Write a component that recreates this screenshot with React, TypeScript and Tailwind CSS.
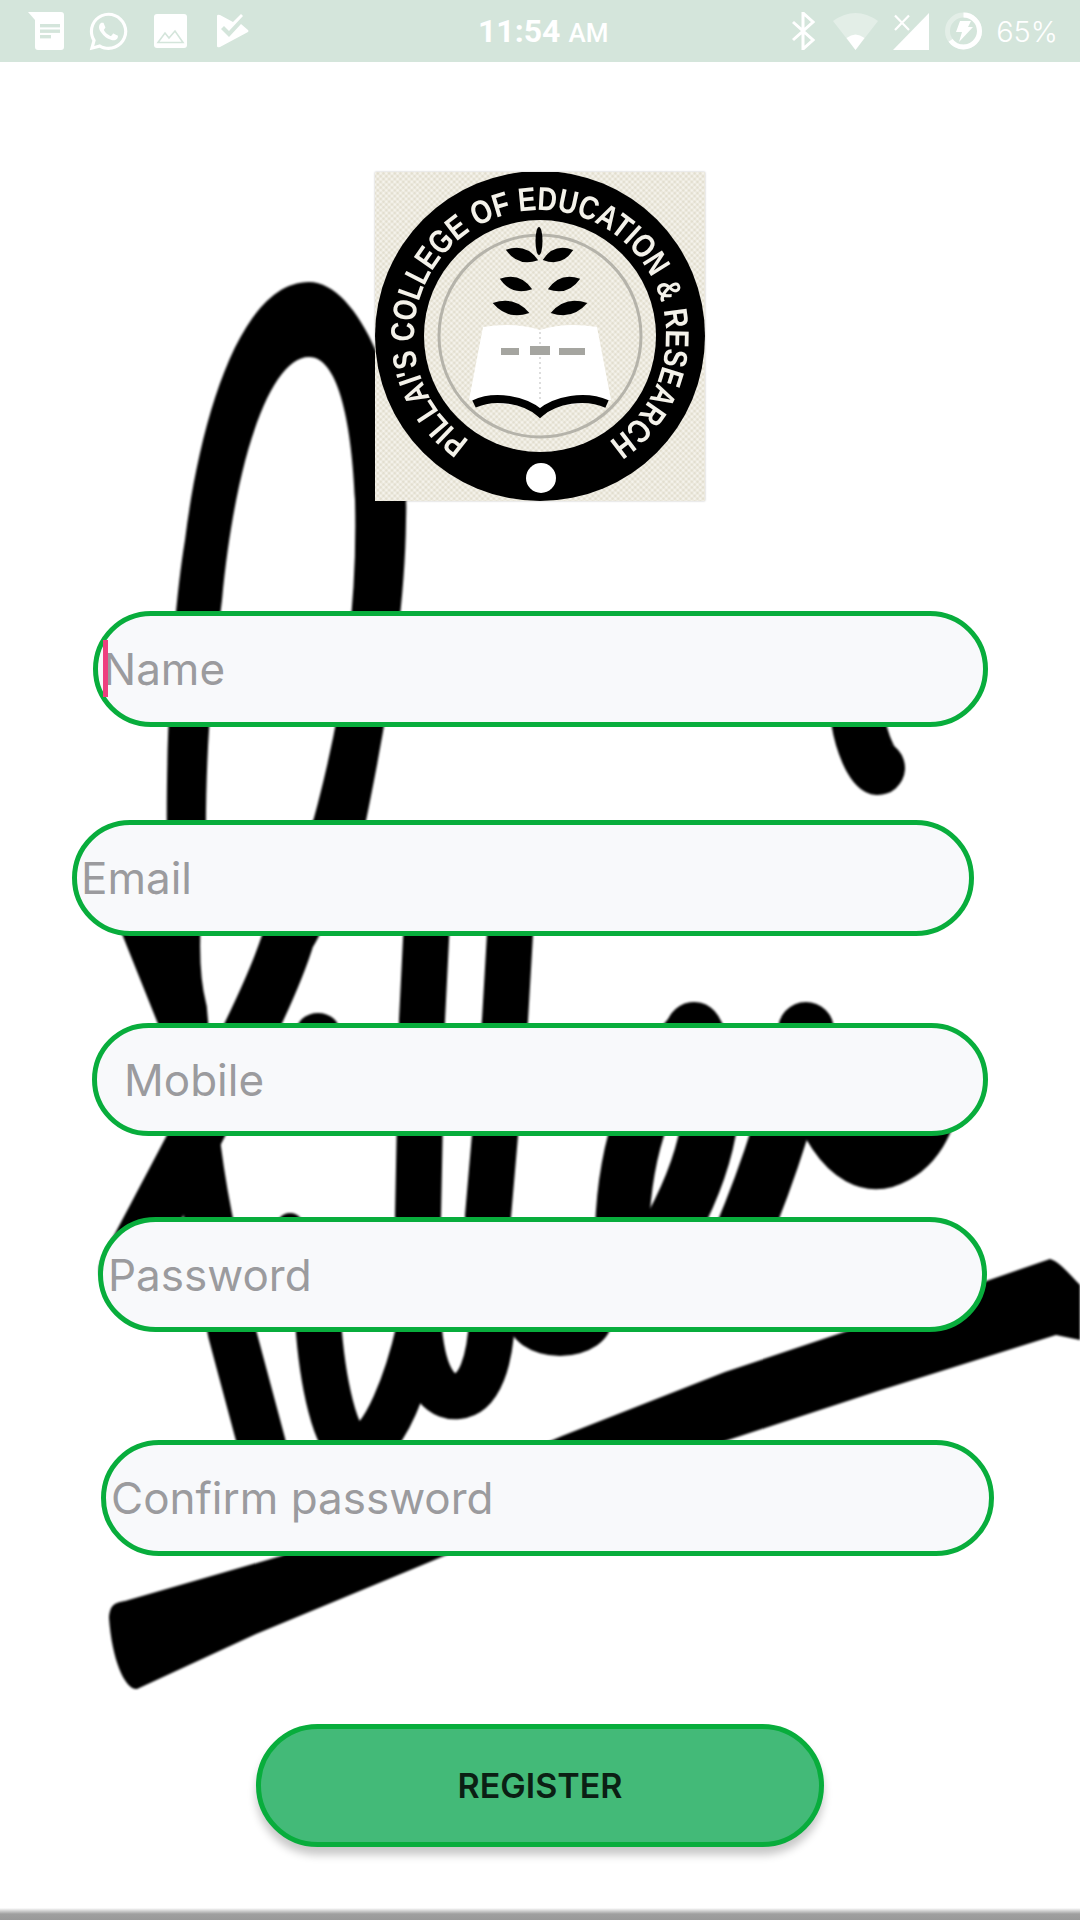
import React from "react";
import { FaWhatsapp } from "react-icons/fa";

const BAR = "#d4e5db";

const fields = [
    { name: "Name", rowClass: "mt-[110px] ml-[93px] w-[895px] h-[116px]", inputClass: "pl-[5px]", caret: true },
    { name: "Email", rowClass: "mt-[93px] ml-[72px] w-[902px] h-[116px]", inputClass: "pl-[4px]", caret: false },
    { name: "Mobile", rowClass: "mt-[87px] ml-[92px] w-[896px] h-[113px]", inputClass: "pl-[27px]", caret: false },
    { name: "Password", rowClass: "mt-[81px] ml-[98px] w-[889px] h-[115px]", inputClass: "pl-[5px]", caret: false },
    { name: "Confirm password", rowClass: "mt-[108px] ml-[101px] w-[893px] h-[116px]", inputClass: "pl-[5px]", caret: false },
];

const StatusBar = () => (
    <div className="flex items-center h-[62px] bg-[#d4e5db] text-white">
        {/* notification icons */}
        <svg className="ml-[28px]" width="36" height="38" viewBox="0 0 36 38">
            <path d="M0 0H33a3 3 0 0 1 3 3V35a3 3 0 0 1-3 3H10a3 3 0 0 1-3-3V8Z" fill="#fff" />
            <rect x="12" y="12" width="20" height="3.4" fill={BAR} />
            <rect x="12" y="17.5" width="20" height="3.4" fill={BAR} />
            <rect x="12" y="23" width="11" height="3.4" fill={BAR} />
        </svg>
        <FaWhatsapp className="ml-[24px] w-[41px] h-[43px]" />
        <svg className="ml-[25px]" width="33" height="34" viewBox="0 0 33 34">
            <rect width="33" height="34" rx="3" fill="#fff" />
            <path d="M4 28.5L11 19L15 24L21 17L29 28.5Z" fill="#fff" stroke={BAR} strokeWidth="1.6" />
        </svg>
        <svg className="ml-[30px]" width="32" height="34" viewBox="0 0 32 34">
            <path d="M0 2Q0 0 3 1L16 8L24 0L26 2L12 17L7 12L4 15L12 23L24 10L31 16Q32 17 31 18L3 33Q0 34 0 32Z" fill="#fff" />
        </svg>

        <div className="ml-[229px] flex items-baseline gap-[8px] font-['Roboto',sans-serif] font-bold leading-none">
            <span className="text-[32px]">11:54</span>
            <span className="text-[26px] font-medium">AM</span>
        </div>

        <div className="ml-auto pr-[22px] flex items-center">
            <svg width="23" height="38" viewBox="0 0 23 38">
                <path d="M1 10L21 28L11 37V1L21 10L1 28" fill="none" stroke="#fff" strokeWidth="3" />
            </svg>
            <svg className="ml-[18px]" width="45" height="37" viewBox="0 0 45 37">
                <path d="M0 8Q22.5 -8 45 8L22.5 37Z" fill="#fff" fillOpacity="0.35" />
                <path d="M13.5 25Q22.5 18 31.5 25L22.5 37Z" fill="#fff" />
            </svg>
            <svg className="ml-[15px]" width="36" height="37" viewBox="0 0 36 37">
                <path d="M0 37H36V0Z" fill="#fff" />
                <path d="M2 2.5L16 17M16 2.5L2 17" stroke="#fff" strokeWidth="2.2" />
            </svg>
            <svg className="ml-[16px]" width="37" height="40" viewBox="0 0 37 40">
                <circle cx="18.5" cy="20" r="16" fill="none" stroke="#fff" strokeOpacity="0.35" strokeWidth="5" />
                <circle cx="18.5" cy="20" r="16" fill="none" stroke="#fff" strokeWidth="5" pathLength={100} strokeDasharray="65 100" transform="rotate(-90 18.5 20)" />
                <path d="M15 10H26L23 16H28L14 31L17 21H11Z" fill="#fff" />
            </svg>
            <span className="ml-[14px] text-[29px] leading-none font-light font-['Inter',sans-serif]">65%</span>
        </div>
    </div>
);

// scanned signature behind the form
const Signature = () => (
    <svg className="absolute inset-0 blur-[1px]" width="1080" height="1920" viewBox="0 0 1080 1920">
        <path d="M167 850C165 720 175 600 185 540C200 420 240 282 309 282C360 282 410 400 406 520C405 620 385 730 360 850L305 850C340 730 358 620 355 500C352 430 340 357 309 357C270 357 235 460 222 600C212 680 205 750 206 850Z" fill="#000" />
        <g fill="none" stroke="#000" strokeLinecap="round">
            <path d="M186 840C178 890 170 960 183 1010C190 1090 195 1150 208 1216L232 1333L262 1445" strokeWidth="48" />
            <path d="M140 925L190 1050" strokeWidth="40" />
            <path d="M330 840C315 880 300 920 289 936C270 1000 215 1100 125 1270" strokeWidth="52" />
            <path d="M428 900L422 1020L418 1216" strokeWidth="46" />
            <path d="M512 900L505 1020L488 1216" strokeWidth="46" />
            <path d="M318 1320C322 1380 335 1445 355 1450C385 1450 410 1370 419 1330" strokeWidth="46" />
            <path d="M419 1330C425 1390 445 1398 458 1396C480 1394 490 1360 492 1320" strokeWidth="46" />
            <path d="M694 1030C650 1080 625 1140 622 1230" strokeWidth="54" />
            <path d="M694 1030C730 1090 705 1170 665 1240" strokeWidth="56" />
            <path d="M806 1030C795 1090 770 1170 740 1240" strokeWidth="56" />
            <path d="M806 1040C815 1120 850 1170 885 1160C915 1150 930 1120 932 1090" strokeWidth="56" />
            <path d="M858 720C862 745 872 765 878 768" strokeWidth="54" />
        </g>
        <ellipse cx="318" cy="1032" rx="22" ry="19" fill="#000" />
        <ellipse cx="290" cy="1230" rx="15" ry="17" fill="#000" />
        <ellipse cx="560" cy="1320" rx="52" ry="36" fill="#000" />
        <path d="M1050 1259C1060 1262 1070 1275 1080 1285V1340L1056 1335L881 1390L725 1441L444 1556L256 1634L137 1689C125 1690 112 1660 109 1618C110 1604 115 1603 125 1601L281 1556L562 1436L725 1372L850 1330L975 1285Z" fill="#000" />
    </svg>
);

const Leaf = ({ cx, cy, rx, rot }: { cx: number; cy: number; rx: number; rot: number }) => (
    <path
        d={`M${cx - rx} ${cy}Q${cx} ${cy - 13} ${cx + rx} ${cy}Q${cx} ${cy + 13} ${cx - rx} ${cy}Z`}
        fill="#000"
        transform={`rotate(${rot} ${cx} ${cy})`}
    />
);

const CollegeLogo = () => (
    <svg className="relative mx-auto mt-[110px] block shadow-[0_0_2px_rgba(0,0,0,0.25)] blur-[0.7px]" width="330" height="329" viewBox="0 0 330 329">
        <defs>
            <pattern id="paper" width="4" height="4" patternUnits="userSpaceOnUse" patternTransform="rotate(45)">
                <rect width="4" height="4" fill="#ece9de" />
                <rect width="2" height="2" fill="#f5f3ec" />
                <rect x="2" y="2" width="2" height="2" fill="#e2decf" />
            </pattern>
        </defs>
        <rect width="330" height="329" fill="url(#paper)" />
        <circle cx="165" cy="164" r="165" fill="#000" />
        <circle cx="165" cy="164" r="116" fill="url(#paper)" />
        <circle cx="165" cy="164" r="101" fill="none" stroke="#b5b3aa" strokeWidth="3" />
        <path id="logoArc" d="M94.5 268.5A126 126 0 1 1 233.6 269.7" fill="none" />
        <text fill="#f4f2ea" fontSize="33" fontWeight="700" fontFamily="'Liberation Sans', sans-serif">
            <textPath href="#logoArc" textLength="644" lengthAdjust="spacingAndGlyphs">PILLAI'S COLLEGE OF EDUCATION &amp; RESEARCH</textPath>
        </text>
        <circle cx="166" cy="306" r="15" fill="#fff" />
        <ellipse cx="164" cy="69" rx="3.5" ry="14" fill="#000" />
        <Leaf cx={147} cy={83} rx={17} rot={18} />
        <Leaf cx={183} cy={83} rx={16} rot={-18} />
        <Leaf cx={141} cy={112} rx={17} rot={18} />
        <Leaf cx={189} cy={112} rx={17} rot={-18} />
        <Leaf cx={136} cy={136} rx={19} rot={15} />
        <Leaf cx={194} cy={136} rx={19} rot={-15} />
        <path d="M108 155Q140 150 165 158Q190 150 222 155L236 228L165 236L94 228Z" fill="#fff" />
        <path d="M165 160V228" stroke="#bbb" strokeWidth="1" strokeDasharray="2 3" />
        <rect x="126" y="176" width="18" height="7" fill="#a5a5a0" />
        <rect x="155" y="174" width="20" height="9" fill="#a5a5a0" />
        <rect x="184" y="176" width="26" height="7" fill="#a5a5a0" />
        <path d="M99 232C120 222 150 228 165 241C180 228 210 222 232 232" fill="none" stroke="#000" strokeWidth="8" />
    </svg>
);

export default function App() {
    return (
        <div className="relative w-[1080px] h-[1920px] overflow-hidden bg-white font-['Inter',sans-serif]">
            <Signature />
            <div className="relative">
                <StatusBar />
                <CollegeLogo />

                {fields.map((field) => (
                    <div key={field.name} className={`relative ${field.rowClass}`}>
                        <input
                            placeholder={field.name}
                            className={`w-full h-full rounded-full border-[5px] border-[#08ad3c] bg-[#f8f9fb] text-[44px] text-[#333] placeholder:text-[#9b9b9e] outline-none ${field.inputClass}`}
                        />
                        {field.caret && <div className="absolute left-[10px] top-[29px] w-[5px] h-[57px] bg-[#ee3f7f]" />}
                    </div>
                ))}

                <button className="block mt-[168px] ml-[256px] w-[568px] h-[123px] rounded-full border-[5px] border-[#08ad3c] bg-[#43ba78] text-[34px] font-semibold text-[#0b1f14] shadow-[0_8px_8px_rgba(0,0,0,0.22)]">
                    REGISTER
                </button>

                <div className="mt-[61px] h-[12px] bg-gradient-to-b from-white via-[#9f9f9f] to-[#999999]" />
            </div>
        </div>
    );
}
